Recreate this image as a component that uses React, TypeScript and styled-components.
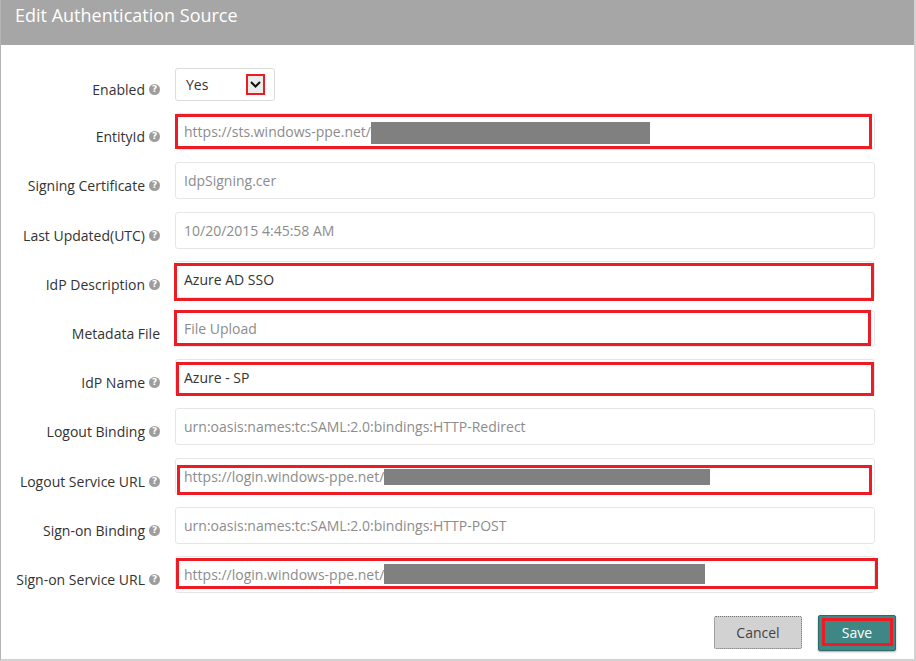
import React from "react";
import styled, { createGlobalStyle } from "styled-components";

const Global = createGlobalStyle`
  html, body { margin: 0; padding: 0; background: #ffffff; }
  body { font-family: "Open Sans", "Liberation Sans", sans-serif; }
  * { box-sizing: border-box; }
`;

const Panel = styled.div`
  width: 916px;
  height: 661px;
  display: flex;
  flex-direction: column;
  background: #ffffff;
  border-left: 1px solid #b4b4b4;
  border-right: 2px solid #d2d2d2;
  border-bottom: 2px solid #d2d2d2;
`;

const Header = styled.div`
  height: 45px;
  flex: none;
  background: #a6a6a6;
  color: #ffffff;
  font-size: 18px;
  line-height: 24px;
  padding: 3px 0 0 14px;
`;

const Body = styled.div`
  flex: 1;
  display: flex;
  flex-direction: column;
  padding: 23px 0 0 0;
`;

const Form = styled.div`
  display: flex;
  flex-direction: column;
  gap: 12.2px;
`;

const Row = styled.div`
  display: grid;
  grid-template-columns: 159px 700px;
  column-gap: 15px;
  align-items: center;
`;

const Label = styled.div`
  display: flex;
  justify-content: flex-end;
  align-items: center;
  gap: 4px;
  font-size: 14px;
  color: #333333;
  padding-top: 10px;
  white-space: nowrap;
`;

const Help = styled.span`
  width: 11px;
  height: 11px;
  border-radius: 50%;
  background: #9d9d9d;
  color: #ffffff;
  font-size: 9px;
  font-weight: 700;
  line-height: 11px;
  text-align: center;
  font-family: "DejaVu Sans", sans-serif;
`;

const Field = styled.div<{ $dark?: boolean }>`
  position: relative;
  height: 37px;
  display: flex;
  align-items: center;
  padding: 0 8px;
  border: 1px solid #e6e6e6;
  border-radius: 3px;
  background: #ffffff;
  font-size: 14px;
  color: ${(p) => (p.$dark ? "#333333" : "#8c8c8c")};
  white-space: nowrap;
`;

const Redacted = styled.span<{ $w: number; $h: number; $dy: number }>`
  display: inline-block;
  width: ${(p) => p.$w}px;
  height: ${(p) => p.$h}px;
  background: #808080;
  transform: translateY(${(p) => p.$dy}px);
`;

const Highlight = styled.div<{ $t: number; $r: number; $b: number; $l: number }>`
  position: absolute;
  top: ${(p) => p.$t}px;
  right: ${(p) => p.$r}px;
  bottom: ${(p) => p.$b}px;
  left: ${(p) => p.$l}px;
  border: 3px solid #ed1c24;
  pointer-events: none;
`;

const Select = styled.div`
  width: 100px;
  height: 33px;
  display: flex;
  align-items: center;
  justify-content: space-between;
  padding: 0 9px 0 10px;
  border: 1px solid #dcdcdc;
  border-radius: 3px;
  font-size: 14px;
  color: #333333;
`;

const Arrow = styled.span`
  width: 19px;
  height: 21px;
  display: flex;
  align-items: center;
  justify-content: center;
  background: #ececec;
  border: 2px solid #ed1c24;
  margin-top: -1px;
`;

const Footer = styled.div`
  display: flex;
  justify-content: flex-end;
  align-items: center;
  gap: 16px;
  padding: 22px 18px 0 0;
`;

const CancelButton = styled.button`
  width: 88px;
  height: 33px;
  background: #d2d2d2;
  border: 1px dotted #6f6f6f;
  border-radius: 2px;
  font-family: inherit;
  font-size: 14px;
  color: #444444;
  padding: 0;
`;

const SaveButton = styled.button`
  position: relative;
  width: 78px;
  height: 36px;
  background: #3e8784;
  border: 1px solid #2e6a67;
  border-radius: 2px;
  box-shadow: 0 1px 2px rgba(0, 0, 0, 0.35);
  font-family: inherit;
  font-size: 14px;
  color: #ffffff;
  padding: 0;
`;

const SaveMark = styled.span`
  position: absolute;
  inset: 2px 2px 4px 3px;
  border: 3px solid #ed1c24;
`;

type Hl = { t: number; r: number; b: number; l: number };
type FieldRow = {
  label: string;
  help: boolean;
  value: string;
  dark?: boolean;
  redact?: { w: number; h: number; dy: number };
  hl?: Hl;
};

const rows: FieldRow[] = [
  {
    label: "EntityId",
    help: true,
    value: "https://sts.windows-ppe.net/",
    redact: { w: 279, h: 22, dy: 1 },
    hl: { t: 0, r: 2, b: 0, l: -1 },
  },
  { label: "Signing Certificate", help: true, value: "IdpSigning.cer" },
  { label: "Last Updated(UTC)", help: true, value: "10/20/2015 4:45:58 AM" },
  {
    label: "IdP Description",
    help: true,
    value: "Azure AD SSO",
    dark: true,
    hl: { t: 1, r: 0, b: -4, l: -2 },
  },
  {
    label: "Metadata File",
    help: false,
    value: "File Upload",
    hl: { t: -1, r: 3, b: 0, l: -2 },
  },
  {
    label: "IdP Name",
    help: true,
    value: "Azure - SP",
    dark: true,
    hl: { t: 2, r: 0, b: -1, l: 0 },
  },
  {
    label: "Logout Binding",
    help: true,
    value: "urn:oasis:names:tc:SAML:2.0:bindings:HTTP-Redirect",
  },
  {
    label: "Logout Service URL",
    help: true,
    value: "https://login.windows-ppe.net/",
    redact: { w: 326, h: 16, dy: 1 },
    hl: { t: 6, r: 2, b: -1, l: 1 },
  },
  {
    label: "Sign-on Binding",
    help: true,
    value: "urn:oasis:names:tc:SAML:2.0:bindings:HTTP-POST",
  },
  {
    label: "Sign-on Service URL",
    help: true,
    value: "https://login.windows-ppe.net/",
    redact: { w: 321, h: 20, dy: 0 },
    hl: { t: 1, r: -4, b: 3, l: 0 },
  },
];

export default function App() {
  return (
    <>
      <Global />
      <Panel>
        <Header>Edit Authentication Source</Header>
        <Body>
          <Form>
            <Row>
              <Label>
                Enabled <Help>?</Help>
              </Label>
              <Select>
                <span>Yes</span>
                <Arrow>
                  <svg width="11" height="7" viewBox="0 0 11 7">
                    <path d="M1 1 L5.5 5.5 L10 1" fill="none" stroke="#111" strokeWidth="2" />
                  </svg>
                </Arrow>
              </Select>
            </Row>
            {rows.map((r) => (
              <Row key={r.label}>
                <Label>
                  {r.label}
                  {r.help && <Help>?</Help>}
                </Label>
                <Field $dark={r.dark}>
                  <span>{r.value}</span>
                  {r.redact && <Redacted $w={r.redact.w} $h={r.redact.h} $dy={r.redact.dy} />}
                  {r.hl && <Highlight $t={r.hl.t} $r={r.hl.r} $b={r.hl.b} $l={r.hl.l} />}
                </Field>
              </Row>
            ))}
          </Form>
          <Footer>
            <CancelButton>Cancel</CancelButton>
            <SaveButton>
              Save
              <SaveMark />
            </SaveButton>
          </Footer>
        </Body>
      </Panel>
    </>
  );
}
